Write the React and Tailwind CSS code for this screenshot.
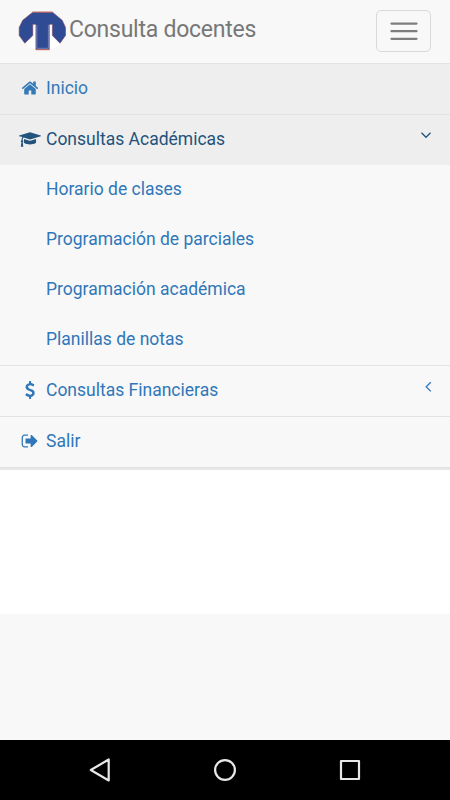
import React, { useState } from 'react';

const ICONS = {
  home: {
    viewBox: '0 0 1792 1792',
    className: 'w-[18px] h-[18px]',
    d: 'M1472 992v480q0 26-19 45t-45 19h-384v-384h-256v384h-384q-26 0-45-19t-19-45v-480q0-1 .5-3t.5-3l575-474 575 474q1 2 1 6zm223-69l-62 74q-8 9-21 11h-3q-13 0-21-7l-692-577-692 577q-12 8-24 7-13-2-21-11l-62-74q-8-10-7-23.5t11-21.5l719-599q32-26 76-26t76 26l244 204v-195q0-14 9-23t23-9h192q14 0 23 9t9 23v408l219 182q10 8 11 21.5t-7 23.5z'
  },
  graduation: {
    viewBox: '0 0 2304 1536',
    className: 'w-[22px] h-[15px]',
    d: 'M1774 708l18 316q4 69-82 128t-235 93.5-323 34.5-323-34.5-235-93.5-82-128l18-316 574 181q22 7 48 7t48-7zm530-324q0 23-22 31l-1120 352q-4 1-10 1t-10-1l-652-206q-43 34-71 111.5t-34 178.5q63 36 63 109 0 69-58 107l58 433q2 14-8 25-9 11-24 11h-192q-15 0-24-11-10-11-8-25l58-433q-58-38-58-107 0-73 65-111 11-207 98-330l-333-104q-22-8-22-31t22-31l1120-352q4-1 10-1t10 1l1120 352q22 8 22 31z'
  },
  dollar: {
    viewBox: '0 0 1792 1792',
    className: 'w-[18px] h-[18px]',
    d: 'M1362 1185q0 153-99.5 263.5t-258.5 136.5v175q0 14-9 23t-23 9h-135q-13 0-22.5-9.5t-9.5-22.5v-175q-66-9-127.5-31t-101.5-44.5-74-48-46.5-37.5-17.5-18q-17-21-2-41l103-135q7-10 23-12 15-2 24 9l2 2q113 99 243 125 37 8 74 8 81 0 142.5-43t61.5-122q0-28-15-53t-33.5-42-58.5-37.5-66-32-80-32.5q-39-16-61.5-25t-61.5-26.5-62.5-31-56.5-35.5-53.5-42.5-43.5-49-35.5-58-21-66.5-8.5-78q0-138 98-242t255-134v-180q0-13 9.5-22.5t22.5-9.5h135q14 0 23 9t9 23v176q57 6 110.5 23t87 33.5 63.5 37.5 39 29 15 14q17 18 5 38l-81 146q-8 15-23 16-14 3-27-7-3-3-14.5-12t-39-26.5-58.5-32-74.5-26-85.5-11.5q-95 0-155 43t-60 111q0 26 8.5 48t29.5 41.5 39.5 33 56 31 60.5 27 70 27.5q53 20 81 31.5t76 35 75.5 42.5 62 50 53 63.5 31.5 76.5 13 94z'
  },
  signOut: {
    viewBox: '0 0 1792 1792',
    className: 'w-[18px] h-[18px]',
    d: 'M704 1440q0 4 1 20t.5 26.5-3 23.5-10 19.5-20.5 6.5h-320q-119 0-203.5-84.5t-84.5-203.5v-704q0-119 84.5-203.5t203.5-84.5h320q13 0 22.5 9.5t9.5 22.5q0 4 1 20t.5 26.5-3 23.5-10 19.5-20.5 6.5h-320q-66 0-113 47t-47 113v704q0 66 47 113t113 47h312l11.5 1 11.5 3 8 5.5 7 9 2 13.5zm928-544q0 26-19 45l-544 544q-19 19-45 19t-45-19-19-45v-288h-448q-26 0-45-19t-19-45v-384q0-26 19-45t45-19h448v-288q0-26 19-45t45-19 45 19l544 544q19 19 19 45z'
  }
};

const Icon = ({ name }) => {
  const icon = ICONS[name];
  return (
    <span className="w-[22px] flex justify-center">
      <svg viewBox={icon.viewBox} className={icon.className} fill="currentColor">
        <path d={icon.d} />
      </svg>
    </span>
  );
};

const Arrow = ({ open }) => (
  <svg
    viewBox="0 0 12 12"
    className={open ? 'w-3 h-3 mr-0.5 mb-2' : 'w-3 h-3 mb-[7px]'}
    fill="none"
    stroke="currentColor"
    strokeWidth="1.3"
  >
    <path d={open ? 'M1.5 3.8L6 8.3l4.5-4.5' : 'M8.8 1.2L4.2 5.8l4.6 4.6'} />
  </svg>
);

const Logo = () => (
  <svg viewBox="0 0 48 40" className="w-12 h-10">
    <path d="M14 12h21v12l9 7q-7 8.500-19.500 8.500T5 31l9-7z" fill="#fff" />
    <path
      d="M14.700 1.200H34.500L44.200 9.300 47.500 16.500V24.500L42 32.200 34.400 24.500V13.300H31.300V38.600H17.900V13.300H14.800V24.500L6.800 32.200 1.200 24.500V16.500L4.700 9.300z"
      fill="#2f4b93"
      stroke="#80405f"
      strokeWidth=".6"
      strokeLinejoin="round"
    />
    <path d="M18.800 14V37.300H30.400V14" fill="none" stroke="#a9b3d8" strokeWidth=".5" />
    <path d="M14.700 1.100H34.500M17.900 38.700H31.300" stroke="#d0664e" strokeWidth=".8" />
  </svg>
);

const MENU = [
  { label: 'Inicio', icon: 'home', active: true },
  {
    label: 'Consultas Académicas',
    icon: 'graduation',
    children: [
      'Horario de clases',
      'Programación de parciales',
      'Programación académica',
      'Planillas de notas'
    ]
  },
  { label: 'Consultas Financieras', icon: 'dollar', children: [] },
  { label: 'Salir', icon: 'signOut' }
];

const MenuItem = ({ item, open, onToggle }) => (
  <li className="border-b border-[#e3e3e3]">
    <a
      href="#"
      onClick={onToggle}
      className={`flex items-center h-[50px] pl-[19px] pr-4 pb-0.5 ${
        open ? 'bg-[#eee] text-[#23527c]' : item.active ? 'bg-[#eee] text-[#337ab7]' : 'text-[#2f77b8]'
      }`}
    >
      <Icon name={item.icon} />
      <span className="ml-[5px] flex-1">{item.label}</span>
      {item.children && <Arrow open={open} />}
    </a>
    {open && (
      <ul>
        {item.children.map((child) => (
          <li key={child}>
            <a href="#" className="flex items-center h-[50px] pl-[46px] pb-0.5 text-[#2f77b8]">
              {child}
            </a>
          </li>
        ))}
      </ul>
    )}
  </li>
);

const App = () => {
  const [openMenu, setOpenMenu] = useState('Consultas Académicas');

  return (
    <div className="h-[800px] flex flex-col bg-[#f8f8f8] font-[Roboto,sans-serif]">
      {/* Barre du haut */}
      <header className="h-16 shrink-0 flex items-center justify-between pl-[18px] pr-[19px] pb-0.5 border-b border-[#e3e3e3]">
        <div className="flex items-center">
          <Logo />
          <span className="ml-[3px] mb-px text-[23px] tracking-[-0.25px] leading-7 text-[#777]">Consulta docentes</span>
        </div>
        <button className="w-[55px] h-[42px] rounded-[5px] border border-[#d9d9d9] flex items-center justify-center">
          <svg viewBox="0 0 28 20" className="w-7 h-5" stroke="#7d7d7d" strokeWidth="2.3" strokeLinecap="round">
            <path d="M1.500 2.600h25M1.500 10.200h25M1.500 17.800h25" />
          </svg>
        </button>
      </header>

      {/* Menu */}
      <nav className="shrink-0 border-b-2 border-[#e7e7e7] text-[17.5px]">
        <ul>
          {MENU.map((item) => (
            <MenuItem
              key={item.label}
              item={item}
              open={openMenu === item.label}
              onToggle={() => item.children && setOpenMenu(openMenu === item.label ? null : item.label)}
            />
          ))}
        </ul>
      </nav>

      <main className="h-36 shrink-0 bg-white" />

      {/* Boutons Android */}
      <footer className="mt-auto h-[60px] shrink-0 bg-black flex items-center justify-between px-[88px]">
        <svg viewBox="0 0 24 24" className="w-6 h-6" fill="none" stroke="#e8e8e8" strokeWidth="2.2" strokeLinejoin="round">
          <path d="M20.700 1.500v21L2.800 12z" />
        </svg>
        <svg viewBox="0 0 24 24" className="w-6 h-6" fill="none" stroke="#e8e8e8" strokeWidth="2.2">
          <circle cx="12" cy="12" r="9.9" />
        </svg>
        <svg viewBox="0 0 24 24" className="w-6 h-6" fill="none" stroke="#e8e8e8" strokeWidth="2.2" strokeLinejoin="round">
          <path d="M3 3h18v18H3z" />
        </svg>
      </footer>
    </div>
  );
};

export default App;
